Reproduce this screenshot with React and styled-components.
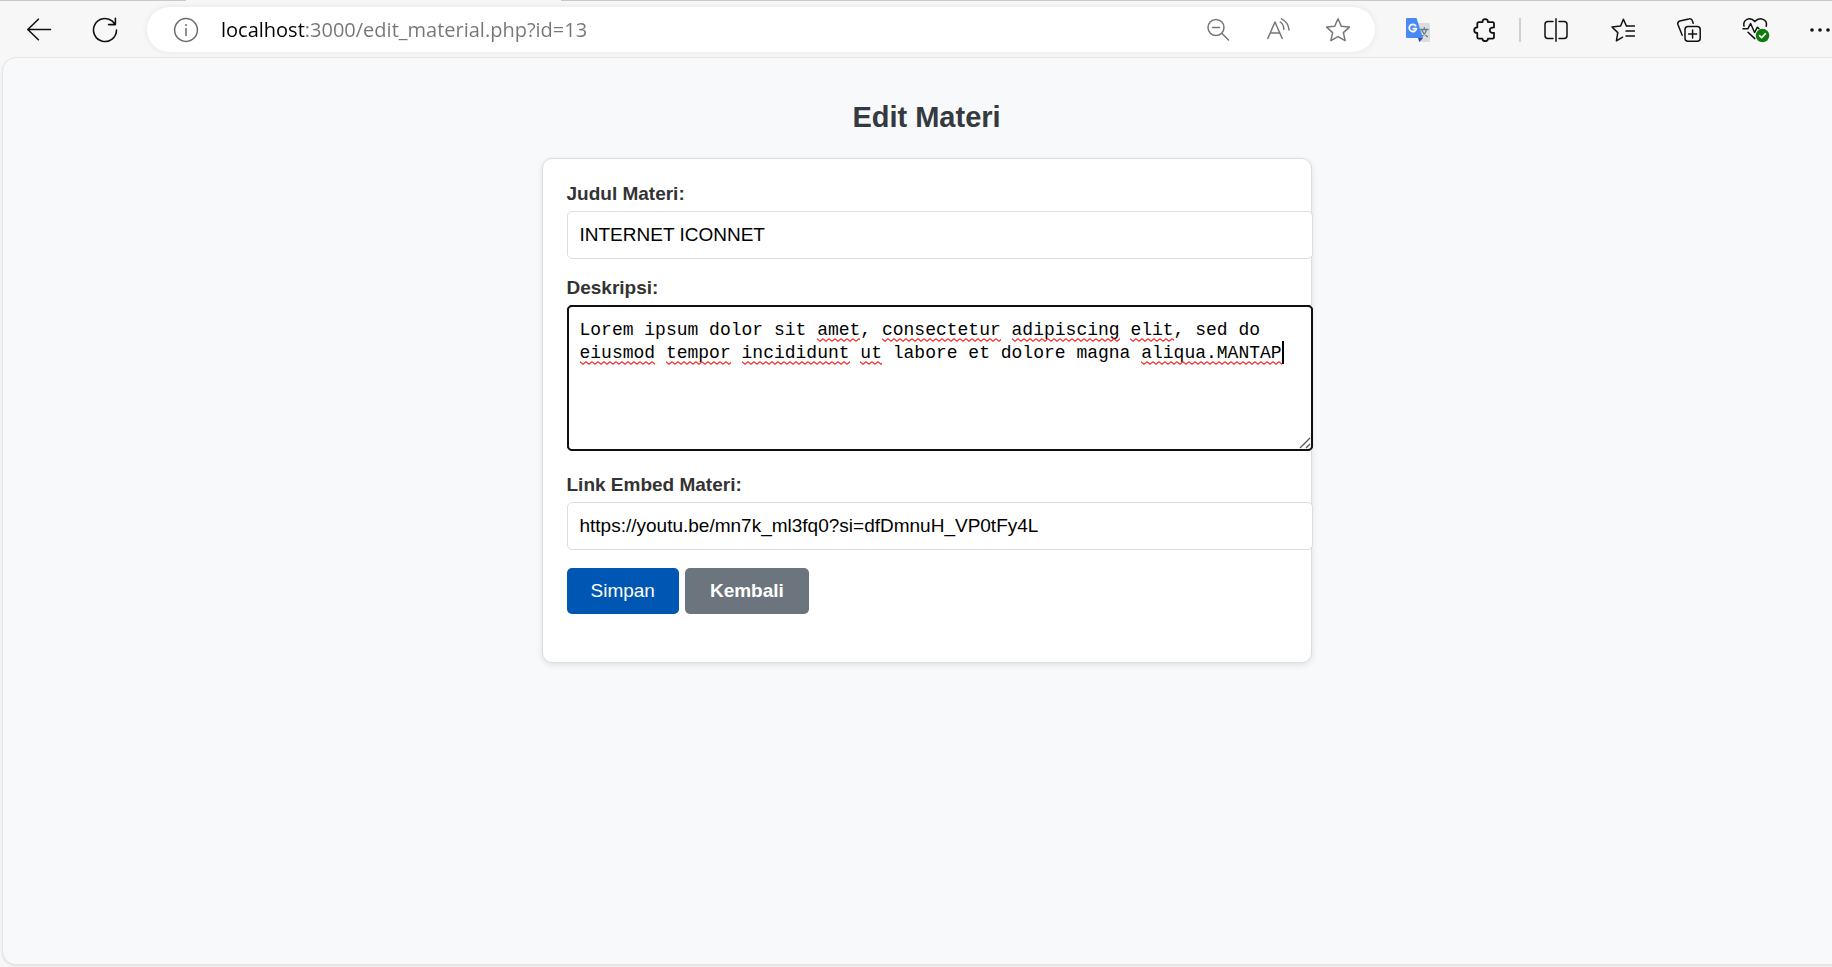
import React, { useState } from 'react';
import styled, { createGlobalStyle } from 'styled-components';

const sans = `Arial, 'Liberation Sans', sans-serif`;
const chromeSans = `'Segoe UI', 'Open Sans', 'Noto Sans', sans-serif`;

const GlobalStyle = createGlobalStyle`
  body {
    margin: 0;
    background: #f7f7f7;
    overflow-x: hidden;
    font-family: ${sans};
  }
`;

const Shell = styled.div`
  display: flex;
  flex-direction: column;
  box-sizing: border-box;
  width: calc(100% + 19px);
  min-height: 100vh;
  padding-bottom: 2px;
`;

const TabStrip = styled.div`
  display: grid;
  grid-template-columns: 186px 1fr;
  column-gap: 375px;
  height: 1px;
`;

const TabStripEdge = styled.div`
  background: #c8c8c8;
`;

const Toolbar = styled.header`
  display: flex;
  align-items: center;
  box-sizing: border-box;
  height: 56px;
  padding: 1px 0 0 5px;
`;

const ToolButton = styled.button`
  flex: none;
  display: flex;
  align-items: center;
  justify-content: center;
  width: ${(p) => p.$width || 67}px;
  height: 45px;
  padding: 0;
  border: 0;
  background: none;
  color: ${(p) => p.$color || '#111'};
`;

const AddressBar = styled.div`
  flex: 1;
  display: flex;
  align-items: center;
  height: 45px;
  margin: 0 9px;
  padding: 0 7px 0 9px;
  border-radius: 23px;
  background: #fff;
  box-shadow: 0 0 6px rgba(0, 0, 0, 0.08);
`;

const AddressInput = styled.input`
  flex: 1;
  min-width: 0;
  margin-left: 5px;
  padding: 0;
  border: 0;
  outline: 0;
  font: 20px/28px ${chromeSans};
  color: #767676;
  background: linear-gradient(90deg, #000 84px, #767676 84px);
  background-clip: text;
  -webkit-text-fill-color: transparent;
`;

const Divider = styled.span`
  flex: none;
  width: 2px;
  height: 24px;
  margin: 0 1px;
  background: #d0d0d0;
`;

const Viewport = styled.main`
  flex: 1;
  display: flex;
  flex-direction: column;
  align-items: center;
  margin-left: 2px;
  padding-top: 43px;
  border: 1px solid #e6e6e6;
  border-radius: 14px;
  background: #f8f9fb;
  box-shadow: 0 1px 2px rgba(0, 0, 0, 0.1);
`;

const Title = styled.h1`
  margin: 0 0 24px;
  font-size: 29px;
  line-height: 33px;
  font-weight: bold;
  color: #343a40;
`;

const Card = styled.form`
  box-sizing: border-box;
  width: 100%;
  max-width: 770px;
  padding: 24px 24px 48px;
  border: 1px solid #ddd;
  border-radius: 10px;
  background: #fff;
  box-shadow: 0 2px 6px rgba(0, 0, 0, 0.1);
`;

const Field = styled.div`
  margin-bottom: ${(p) => p.$gap || 18}px;
`;

const Label = styled.label`
  display: block;
  margin-bottom: 6px;
  font-size: 19px;
  line-height: 22px;
  font-weight: bold;
  color: #333;
`;

const TextInput = styled.input`
  display: block;
  box-sizing: content-box;
  width: 100%;
  height: 22px;
  padding: 12px;
  border: 1px solid #ddd;
  border-radius: 5px;
  outline: 0;
  background: #fff;
  font: 19px/22px ${sans};
  color: #000;
`;

const EditorWrap = styled.div`
  position: relative;
  font: 18px/23px 'Liberation Mono', monospace;
`;

const grip = encodeURIComponent(
  `<svg xmlns="http://www.w3.org/2000/svg" width="15" height="15"><path d="M3 13 13 3M9 13 13 9" fill="none" stroke="#555" stroke-width="1.3"/></svg>`
);

const Editor = styled.textarea`
  display: block;
  box-sizing: content-box;
  width: 100%;
  height: 120px;
  padding: 13px 12px 11px;
  border: 1px solid #101010;
  border-radius: 5px;
  outline: 2px solid #101010;
  outline-offset: -2px;
  background: #fff;
  font: inherit;
  color: #000;
  caret-color: transparent;
  resize: vertical;

  &::-webkit-resizer {
    background: url("data:image/svg+xml,${grip}") no-repeat right bottom;
  }
`;

const Marks = styled.div`
  position: absolute;
  top: 13px;
  left: 13px;
  pointer-events: none;
`;

const wave = encodeURIComponent(
  `<svg xmlns="http://www.w3.org/2000/svg" width="6" height="4"><path d="M-1.5 .8 0 .8 3 3.2 6 .8 7.5 2" fill="none" stroke="#f22" stroke-width="1.2"/></svg>`
);

const Squiggle = styled.span`
  position: absolute;
  top: ${(p) => p.$row * 23 + 20}px;
  left: ${(p) => p.$col}ch;
  width: ${(p) => p.$len}ch;
  height: 4px;
  background: url("data:image/svg+xml,${wave}") repeat-x;
`;

const Caret = styled.span`
  position: absolute;
  top: ${(p) => p.$row * 23}px;
  left: ${(p) => p.$col}ch;
  width: 2px;
  height: 23px;
  background: #000;
`;

const Actions = styled.div`
  display: flex;
  gap: 6px;
`;

const SaveButton = styled.button`
  padding: 12px 24px;
  border: 0;
  border-radius: 5px;
  background: #0056b3;
  color: #fff;
  font: 19px/22px ${sans};
`;

const BackLink = styled.a`
  padding: 12px 25px;
  border-radius: 5px;
  background: #6c757d;
  color: #fff;
  font: bold 19px/22px ${sans};
  text-decoration: none;
`;

const Icon = ({ size = 24, children, sw = 1.5, ...rest }) => (
  <svg
    width={size}
    height={size}
    viewBox={`0 0 ${size} ${size}`}
    fill="none"
    stroke="currentColor"
    strokeWidth={sw}
    strokeLinecap="round"
    strokeLinejoin="round"
    aria-hidden="true"
    {...rest}
  >
    {children}
  </svg>
);

const BackIcon = () => (
  <Icon size={26} sw={1.6}>
    <path d="M24.5 12.5H2M12.4 2.2 1.8 12.5 12.4 22.8" />
  </Icon>
);

const ReloadIcon = () => (
  <Icon size={26} sw={1.6}>
    <path d="M24.5 13A11.5 11.5 0 1 1 20.4 4.2L23.2 7.4M23.4 1.4V7.6H16.6" />
  </Icon>
);

const InfoIcon = () => (
  <Icon size={26} sw={1.5}>
    <circle cx="13" cy="13" r="11.4" />
    <path d="M13 11.5V18.5" />
    <circle cx="13" cy="8" r="1" fill="currentColor" stroke="none" />
  </Icon>
);

const ZoomOutIcon = () => (
  <Icon>
    <circle cx="10" cy="9.5" r="8" />
    <path d="M6.5 9.5h7M15.8 15.3 22.5 22" />
  </Icon>
);

const ReadAloudIcon = () => (
  <Icon>
    <path d="M1.8 20.5 9 4 16.2 20.5M4.4 15H13.6" />
    <path d="M14.3 4A9 9 0 0 1 17.8 11.2M15.5 .9A13.5 13.5 0 0 1 23 12" />
  </Icon>
);

const StarIcon = () => (
  <Icon size={26}>
    <path d="M13 1.8 16.3 9.2 24.4 10.1 18.4 15.6 20.1 23.6 13 19.6 5.9 23.6 7.6 15.6 1.6 10.1 9.7 9.2Z" />
  </Icon>
);

const TranslateIcon = () => (
  <Icon stroke="none">
    <path d="M9 5H23a1 1 0 0 1 1 1V23a1 1 0 0 1-1 1H13Z" fill="#dcdcdc" />
    <path d="M12 20H17L13.4 24Z" fill="#3949ab" />
    <path d="M1 0H10.5L17 20H1a1 1 0 0 1-1-1V1a1 1 0 0 1 1-1Z" fill="#4a89f3" />
    <path d="M9.6 7.6A3.6 3.6 0 1 0 10.4 10.6H7.2" stroke="#fff" strokeWidth="1.8" fill="none" />
    <path d="M14.8 11.5H22M18.3 9.7V11.5M20.5 11.7C20 14.5 17.8 17 16.5 18M16 12.5C17 15 19.5 17.6 21.3 18.6" stroke="#607d8b" strokeWidth="1.3" fill="none" />
  </Icon>
);

const PuzzleIcon = () => (
  <Icon sw={1.8}>
    <path d="M5.9 4.2H9.4C9.4 2.4 10.6 1.2 12.2 1.2S15 2.4 15 4.2H19.4a1.6 1.6 0 0 1 1.6 1.6V9.4C18.2 9.4 16.8 10.6 16.8 12.2S18.2 15 21 15V19a1.6 1.6 0 0 1-1.6 1.6H15C15 22 13.8 23.2 12.2 23.2S9.4 22 9.4 20.6H5.9A1.6 1.6 0 0 1 4.3 19V15C2.4 15 1.2 13.8 1.2 12.2S2.4 9.4 4.3 9.4V5.8A1.6 1.6 0 0 1 5.9 4.2" />
  </Icon>
);

const SplitIcon = () => (
  <Icon>
    <path d="M12 .8V23.2M9 3.5H4A3 3 0 0 0 1 6.5V17.5A3 3 0 0 0 4 20.5H9M15 3.5H20A3 3 0 0 1 23 6.5V17.5A3 3 0 0 1 20 20.5H15" />
  </Icon>
);

const FavoritesIcon = () => (
  <Icon>
    <path d="M16 8H23.4M15 13H23.4M15 18H23.4" />
    <path d="M15.4 8 12.4 1.2 9.6 8 1 9 6.8 14.6 5.4 22.8 11.6 19.2" />
  </Icon>
);

const CollectionsIcon = () => (
  <Icon>
    <rect x="8" y="8.5" width="15.2" height="14.7" rx="3" />
    <path d="M15.6 12V20M11.6 16H19.6" />
    <path d="M5.2 17.2 1 6.8A3 3 0 0 1 2.8 3L11.8 .9A3 3 0 0 1 15.5 3L16.2 5.2" />
  </Icon>
);

const HealthIcon = () => (
  <Icon size={28}>
    <path d="M2 10.2C.6 3.6 8 .2 12.8 5.6C17.8 .2 26 3.6 24.2 10.2" />
    <path d="M1 12.8H5.8L8.6 7.5 12.6 16.5 15.4 11.2 17 12.8M6 16.2 12.8 22.6" />
    <circle cx="20.5" cy="19.5" r="6.8" fill="#107c10" stroke="none" />
    <path d="M17.6 19.6 19.6 21.7 23.4 17.6" stroke="#fff" strokeWidth="1.6" />
  </Icon>
);

const MoreIcon = () => (
  <Icon stroke="none" fill="currentColor">
    <circle cx="4" cy="12" r="1.8" />
    <circle cx="12" cy="12" r="1.8" />
    <circle cx="20" cy="12" r="1.8" />
  </Icon>
);

const initialDescription =
  'Lorem ipsum dolor sit amet, consectetur adipiscing elit, sed do eiusmod tempor incididunt ut labore et dolore magna aliqua.MANTAP';
const lineBreak = initialDescription.indexOf('eiusmod');
const unknownWords = [
  'amet', 'consectetur', 'adipiscing', 'elit', 'eiusmod',
  'tempor', 'incididunt', 'ut ', 'aliqua.MANTAP',
];

const marks = unknownWords.map((word) => {
  const at = initialDescription.indexOf(word, word === 'ut ' ? lineBreak : 0);
  const row = at >= lineBreak ? 1 : 0;
  return { word, row, col: at - row * lineBreak, len: word.trim().length };
});

export default function App() {
  const [url, setUrl] = useState('localhost:3000/edit_material.php?id=13');
  const [title, setTitle] = useState('INTERNET ICONNET');
  const [description, setDescription] = useState(initialDescription);
  const [link, setLink] = useState('https://youtu.be/mn7k_ml3fq0?si=dfDmnuH_VP0tFy4L');
  const untouched = description === initialDescription;

  return (
    <>
      <GlobalStyle />
      <Shell>
        <TabStrip>
          <TabStripEdge />
          <TabStripEdge />
        </TabStrip>
        <Toolbar>
          <ToolButton type="button" aria-label="Back"><BackIcon /></ToolButton>
          <ToolButton type="button" aria-label="Refresh" $width={66}><ReloadIcon /></ToolButton>
          <AddressBar>
            <ToolButton type="button" aria-label="Site information" $width={60} $color="#6b6b6b"><InfoIcon /></ToolButton>
            <AddressInput aria-label="Address" value={url} onChange={(e) => setUrl(e.target.value)} spellCheck={false} />
            <ToolButton type="button" aria-label="Zoom out" $width={60} $color="#767676"><ZoomOutIcon /></ToolButton>
            <ToolButton type="button" aria-label="Read aloud" $width={60} $color="#767676"><ReadAloudIcon /></ToolButton>
            <ToolButton type="button" aria-label="Add to favorites" $width={60} $color="#767676"><StarIcon /></ToolButton>
          </AddressBar>
          <ToolButton type="button" aria-label="Translate"><TranslateIcon /></ToolButton>
          <ToolButton type="button" aria-label="Extensions"><PuzzleIcon /></ToolButton>
          <Divider />
          <ToolButton type="button" aria-label="Split screen"><SplitIcon /></ToolButton>
          <ToolButton type="button" aria-label="Favorites"><FavoritesIcon /></ToolButton>
          <ToolButton type="button" aria-label="Collections" $width={66}><CollectionsIcon /></ToolButton>
          <ToolButton type="button" aria-label="Browser essentials"><HealthIcon /></ToolButton>
          <ToolButton type="button" aria-label="More" $width={62}><MoreIcon /></ToolButton>
        </Toolbar>
        <Viewport>
          <Title>Edit Materi</Title>
          <Card onSubmit={(e) => e.preventDefault()}>
            <Field>
              <Label htmlFor="judul">Judul Materi:</Label>
              <TextInput id="judul" value={title} onChange={(e) => setTitle(e.target.value)} />
            </Field>
            <Field $gap={23}>
              <Label htmlFor="deskripsi">Deskripsi:</Label>
              <EditorWrap>
                <Editor
                  id="deskripsi"
                  value={description}
                  onChange={(e) => setDescription(e.target.value)}
                  spellCheck={false}
                />
                {untouched && (
                  <Marks aria-hidden="true">
                    {marks.map((m) => (
                      <Squiggle key={m.word} $row={m.row} $col={m.col} $len={m.len} />
                    ))}
                    <Caret $row={1} $col={initialDescription.length - lineBreak} />
                  </Marks>
                )}
              </EditorWrap>
            </Field>
            <Field>
              <Label htmlFor="link">Link Embed Materi:</Label>
              <TextInput id="link" value={link} onChange={(e) => setLink(e.target.value)} />
            </Field>
            <Actions>
              <SaveButton type="submit">Simpan</SaveButton>
              <BackLink href="#materi">Kembali</BackLink>
            </Actions>
          </Card>
        </Viewport>
      </Shell>
    </>
  );
}
